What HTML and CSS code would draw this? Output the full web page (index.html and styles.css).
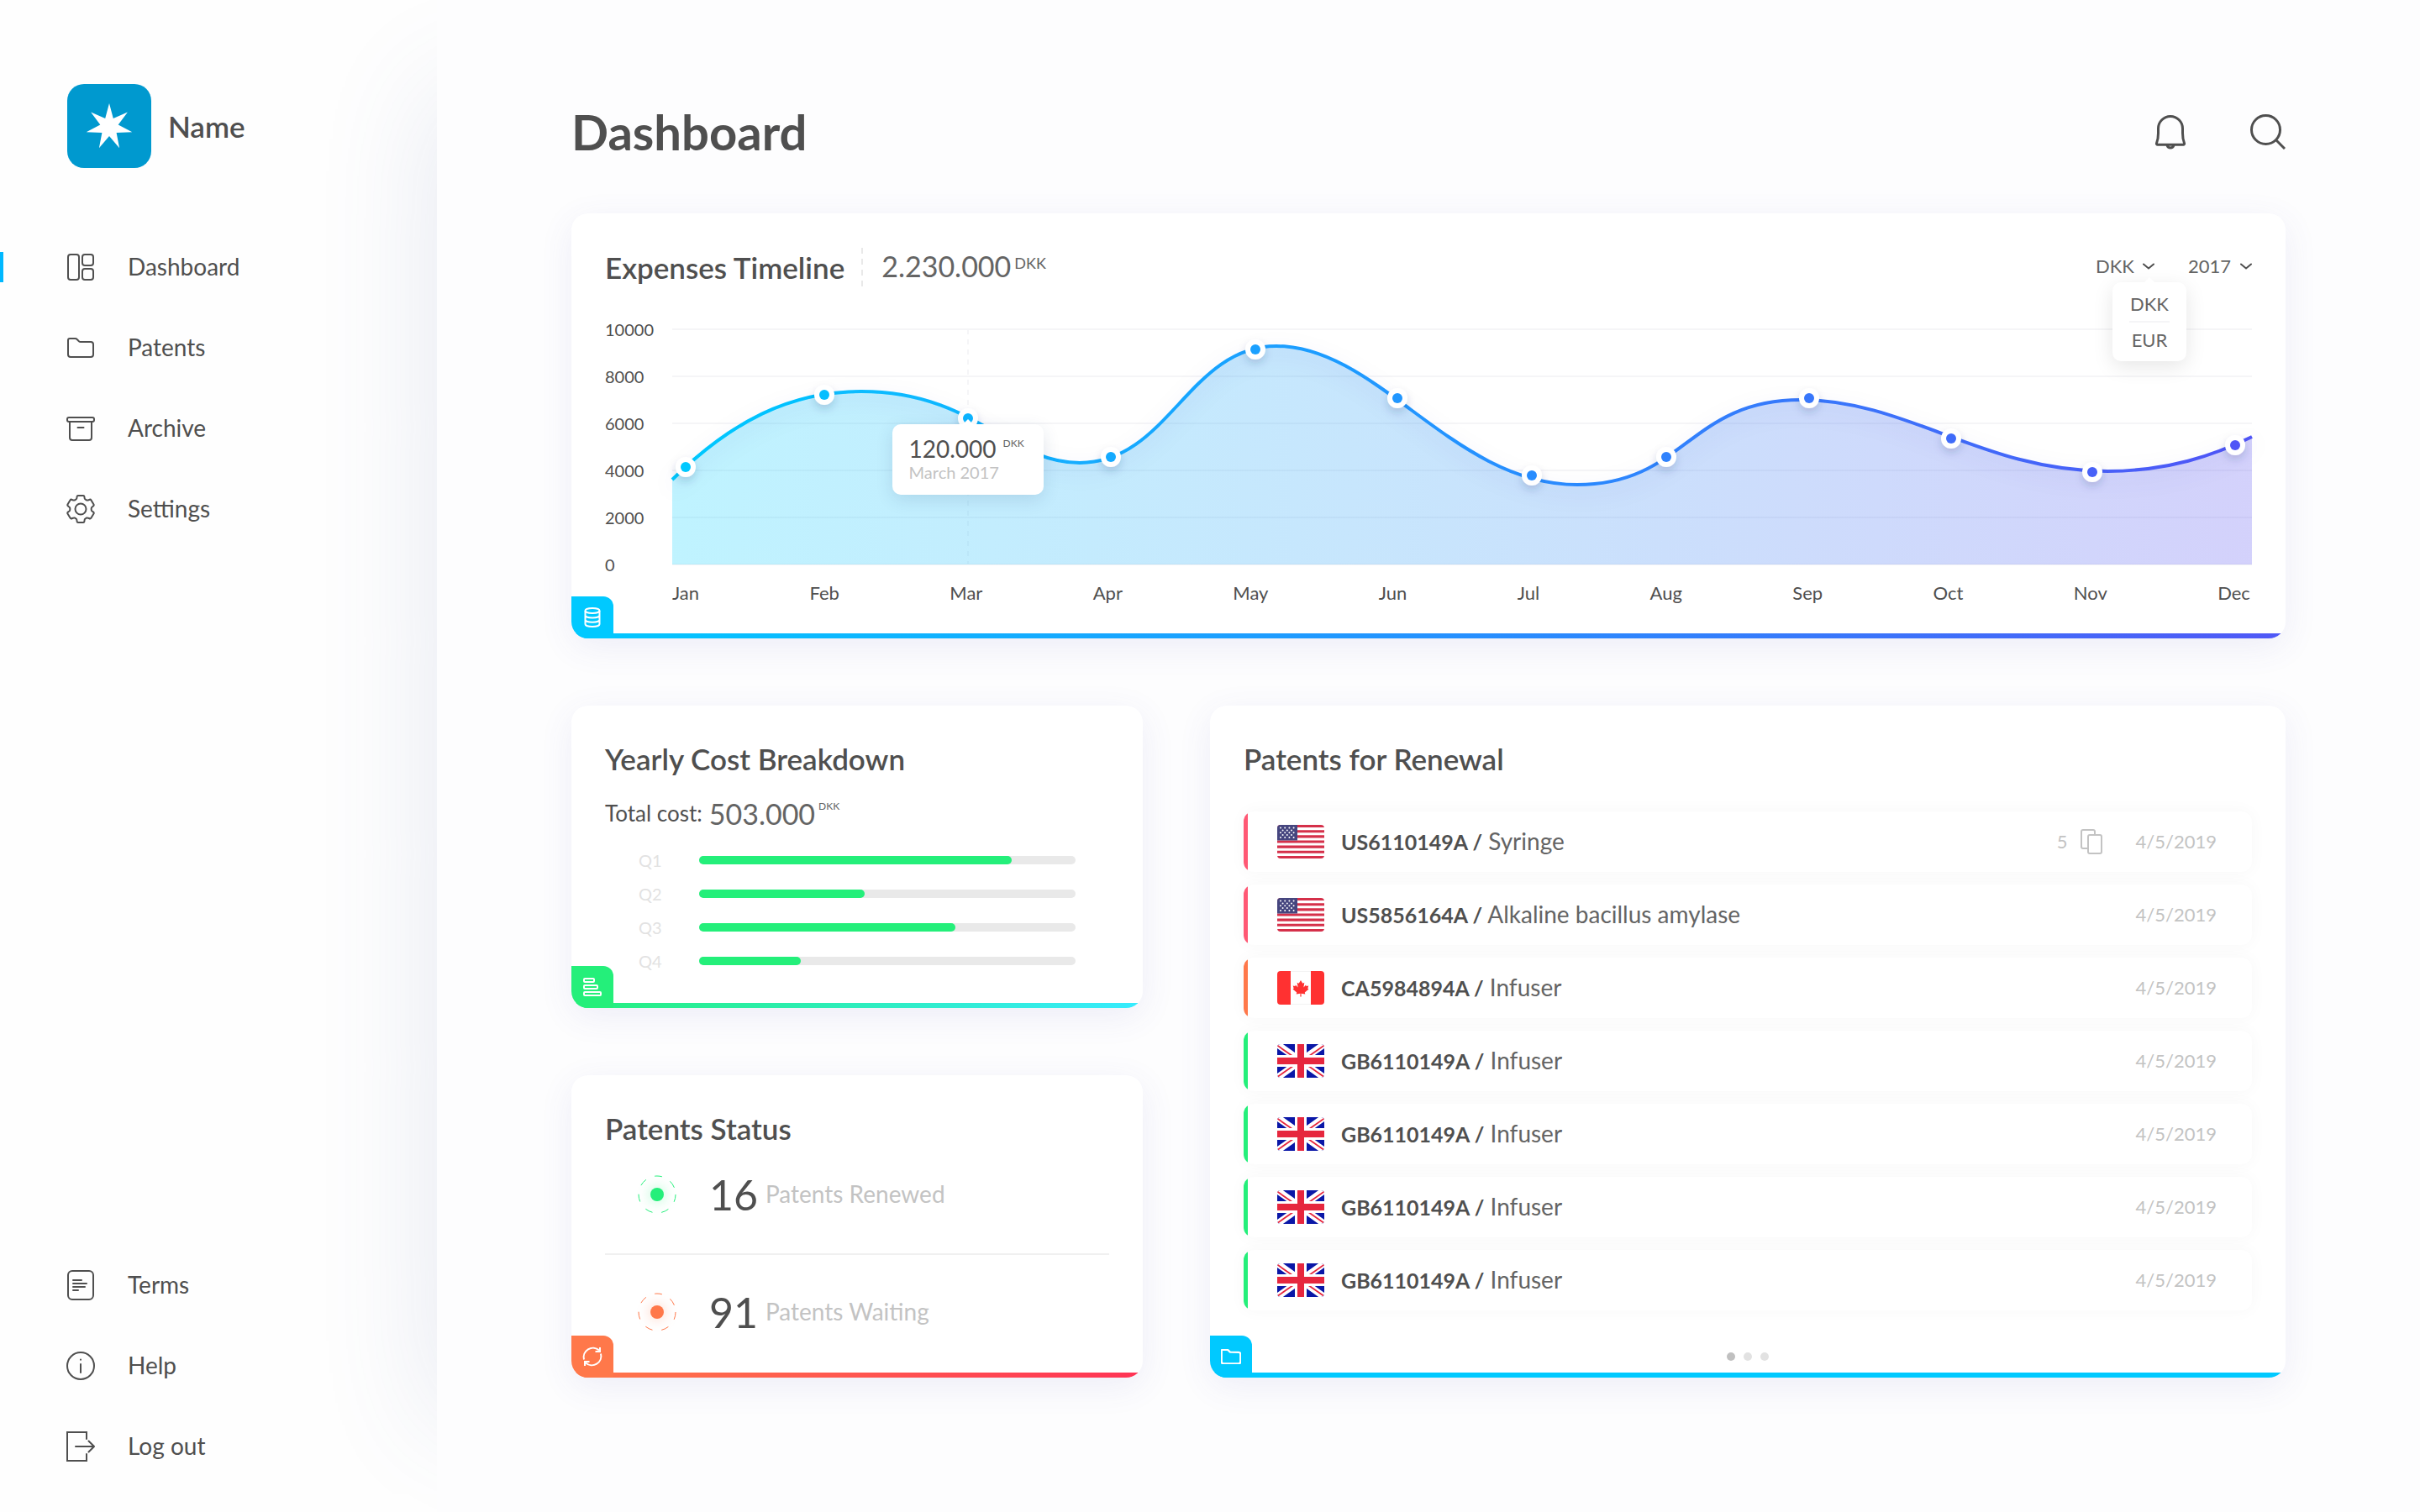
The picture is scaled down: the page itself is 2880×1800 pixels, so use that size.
FILE: index.html
```html
<!DOCTYPE html>
<html lang="en">
<head>
<meta charset="utf-8">
<title>Dashboard</title>
<meta name="viewport" content="width=device-width, initial-scale=1">
<link rel="stylesheet" href="styles.css">
</head>
<body>
<svg class="sprite" aria-hidden="true">
  <symbol id="folder" viewBox="0 0 32 24">
    <path d="M1 3a2 2 0 0 1 2-2h6.500a3 3 0 0 1 2.200 1l2.200 2.200a3 3 0 0 0 2 .8H28a3 3 0 0 1 3 3v12a3 3 0 0 1-3 3H4a3 3 0 0 1-3-3z"/>
  </symbol>
  <symbol id="chevron" viewBox="0 0 14 8"><path d="M1 1.500l6 5 6-5"/></symbol>
  <symbol id="flag-us" viewBox="0 0 56 40">
    <path fill="#fff" d="M0 0h56v40H0z"/>
    <path stroke="#d5304a" stroke-width="3.080" d="M0 1.540h56M0 7.700h56M0 13.860h56M0 20h56M0 26.160h56M0 32.300h56M0 38.460h56"/>
    <path fill="#46467f" d="M0 0h24v18.500H0z"/>
    <path stroke="#fff" stroke-width="2" stroke-linecap="round" stroke-dasharray="0 5.200" d="M4 3.500h17M4 9.200h17M4 15h17M6.600 6.400h14M6.600 12.100h14"/>
  </symbol>
  <symbol id="flag-ca" viewBox="0 0 56 40">
    <path fill="#fff" d="M0 0h56v40H0z"/>
    <path fill="none" stroke="#f3f3f3" d="M16 .5h24M16 39.500h24"/>
    <path fill="#ff3131" d="M0 0h16v40H0zM40 0h16v40H40zM28 11l2.300 3.800 2-1-.9 5.600 2.700-2.900.5 1.500 2.700-.4-1 3.200 1.200.8-4.700 3.900.5 2-4.800-.7.200 3.700h-1.400l.2-3.700-4.800.7.500-2-4.700-3.900 1.200-.8-1-3.200 2.700.4.500-1.500 2.700 2.900-.9-5.600 2 1z"/>
  </symbol>
  <symbol id="flag-gb" viewBox="0 0 56 40">
    <path fill="#0a17a7" d="M0 0h56v40H0z"/>
    <path stroke="#fff" stroke-width="8" d="M-2-1.400L58 41.400M58-1.400L-2 41.400"/>
    <path stroke="#e6273e" stroke-width="1.800" d="M0 1.500L19 14.800M56 1.500L37 14.800M1 38.500L20 25.200M55 38.500L36 25.200"/>
    <path stroke="#fff" stroke-width="14" d="M28 0v40M0 20h56"/>
    <path stroke="#e6273e" stroke-width="8" d="M28 0v40M0 20h56"/>
  </symbol>
</svg>

<div class="layout">
  <aside class="sidebar">
    <a class="brand" href="#">
      <svg class="logo" viewBox="0 0 100 100" aria-hidden="true">
        <rect width="100" height="100" rx="20" fill="#0099cf"/>
        <path fill="#fff" d="M50 23l4.800 18.100 17.100-7.600-11.200 15.100 16.600 8.600-18.700.7 3.500 18.300L50 62 37.900 76.200l3.500-18.300-18.700-.7 16.600-8.600-11.200-15.100 17.100 7.600z"/>
      </svg>
      <span class="brand-name">Name</span>
    </a>
    <nav class="nav">
      <a class="nav-item is-active" href="#">
        <svg class="nav-icon" viewBox="0 0 34 36" aria-hidden="true"><rect x="2" y="3" width="13" height="30" rx="3"/><rect x="19" y="3" width="13" height="13" rx="3"/><rect x="19" y="20" width="13" height="13" rx="3"/></svg>
        Dashboard
      </a>
      <a class="nav-item" href="#">
        <svg class="nav-icon" viewBox="-1 -6 34 36" aria-hidden="true"><use href="#folder" width="32" height="24"/></svg>
        Patents
      </a>
      <a class="nav-item" href="#">
        <svg class="nav-icon" viewBox="0 0 34 36" aria-hidden="true"><rect x="1" y="5" width="32" height="5" rx="2"/><path d="M4 10v19a3 3 0 0 0 3 3h20a3 3 0 0 0 3-3V10M13.500 17h7"/></svg>
        Archive
      </a>
      <a class="nav-item" href="#">
        <svg class="nav-icon" viewBox="-17 -18 34 36" aria-hidden="true"><circle r="6.500"/><path d="M-5.500-11.500Q-4.500-11.900-4.500-14Q-4.400-16-3-16H3Q4.400-16 4.500-14Q4.500-11.900 5.500-11.500L7.200-10.500Q8.200-10.200 10-11Q11.700-11.900 12.500-10.500L15.500-5.500Q16.200-4.200 14.500-3.200Q12.700-2.200 12.700-1V1Q12.700 2.200 14.500 3.200Q16.200 4.200 15.500 5.500L12.500 10.500Q11.700 11.900 10 11Q8.200 10.200 7.200 10.500L5.500 11.500Q4.500 11.900 4.500 14Q4.400 16 3 16H-3Q-4.400 16-4.500 14Q-4.500 11.900-5.500 11.500L-7.200 10.500Q-8.200 10.200-10 11Q-11.700 11.900-12.500 10.500L-15.500 5.500Q-16.200 4.200-14.500 3.200Q-12.700 2.200-12.700 1V-1Q-12.700-2.200-14.500-3.200Q-16.200-4.200-15.500-5.500L-12.500-10.500Q-11.700-11.900-10-11Q-8.200-10.200-7.200-10.500Z"/></svg>
        Settings
      </a>
    </nav>
    <nav class="nav nav-bottom">
      <a class="nav-item" href="#">
        <svg class="nav-icon" viewBox="0 0 34 36" aria-hidden="true"><rect x="2" y="1" width="30" height="34" rx="5"/><path d="M8 12h10M8 16h16M8 20h14M8 24h6"/></svg>
        Terms
      </a>
      <a class="nav-item" href="#">
        <svg class="nav-icon" viewBox="0 0 34 36" aria-hidden="true"><circle cx="17" cy="18" r="16"/><path d="M17 16v10M17 10.500v.2"/></svg>
        Help
      </a>
      <a class="nav-item" href="#">
        <svg class="nav-icon" viewBox="0 0 34 36" aria-hidden="true"><path d="M24 9V1H1v34h23v-8M11 18h22M26.500 11.500L33 18l-6.500 6.500"/></svg>
        Log out
      </a>
    </nav>
  </aside>

  <main class="main">
    <header class="topbar">
      <h1>Dashboard</h1>
      <div class="actions">
        <button class="icon-button" type="button" aria-label="Notifications">
          <svg viewBox="0 0 42 42"><path d="M3.500 34.500c2-5 2-7 2-12V17a14.500 14.500 0 0 1 29 0v5.500c0 5 0 7 2 12a1.300 1.300 0 0 1-1.200 1.800H4.700a1.300 1.300 0 0 1-1.200-1.800zM16 37a4.200 4.200 0 0 0 8 0"/></svg>
        </button>
        <button class="icon-button" type="button" aria-label="Search">
          <svg viewBox="0 0 42 42"><circle cx="18.500" cy="18.500" r="17"/><path d="M31 31l10 10"/></svg>
        </button>
      </div>
    </header>

    <section class="card card-expenses">
      <div class="card-body">
        <div class="card-head">
          <h2>Expenses Timeline</h2>
          <p class="amount total">2.230.000<sup>DKK</sup></p>
          <div class="filters">
            <div class="filter">
              <label class="select">
                <select aria-label="Currency"><option>DKK</option><option>EUR</option></select>
                <svg aria-hidden="true"><use href="#chevron"/></svg>
              </label>
              <ul class="menu">
                <li>DKK</li>
                <li>EUR</li>
              </ul>
            </div>
            <label class="select">
              <select aria-label="Year"><option>2017</option></select>
              <svg aria-hidden="true"><use href="#chevron"/></svg>
            </label>
          </div>
        </div>

        <div class="chart">
          <ol class="y-axis"><li>10000</li><li>8000</li><li>6000</li><li>4000</li><li>2000</li><li>0</li></ol>
          <div class="plot">
            <svg viewBox="0 0 1880 280" role="img" aria-label="Expenses by month">
              <defs>
                <linearGradient id="line" gradientUnits="userSpaceOnUse" x1="0" y1="0" x2="1880" y2="0">
                  <stop offset="0" stop-color="#00c9ff"/><stop offset=".5" stop-color="#2492ff"/><stop offset="1" stop-color="#5054f6"/>
                </linearGradient>
                <linearGradient id="area" gradientUnits="userSpaceOnUse" x1="0" y1="0" x2="1880" y2="0">
                  <stop offset="0" stop-color="#00d0ff"/><stop offset=".5" stop-color="#2492f5"/><stop offset="1" stop-color="#5048f0"/>
                </linearGradient>
                <filter id="glow" x="-5%" y="-20%" width="110%" height="150%"><feDropShadow dx="0" dy="8" stdDeviation="12" flood-color="#3050a0" flood-opacity=".14"/></filter>
                <filter id="dot" x="-100%" y="-100%" width="300%" height="300%"><feDropShadow dx="0" dy="5" stdDeviation="5" flood-color="#204070" flood-opacity=".18"/></filter>
              </defs>
              <path class="grid-lines" d="M0 0h1880M0 56h1880M0 112h1880M0 168h1880M0 224h1880M0 280h1880"/>
              <path class="marker-line" d="M352 0v280"/>
              <path fill="url(#area)" opacity=".25" d="M0 179C70 110 140 74 225 74C360 74 400 159 485 159C590 159 615 20 719 20C840 20 930 185 1077 185C1205 185 1210 84 1343 84C1470 84 1560 169 1708 169C1780 169 1835 150 1880 128V280H0Z"/>
              <path fill="none" stroke="url(#line)" stroke-width="4" filter="url(#glow)" d="M0 179C70 110 140 74 225 74C360 74 400 159 485 159C590 159 615 20 719 20C840 20 930 185 1077 185C1205 185 1210 84 1343 84C1470 84 1560 169 1708 169C1780 169 1835 150 1880 128"/>
              <g fill="#fff" filter="url(#dot)">
                <circle cx="16" cy="164" r="12"/><circle cx="181" cy="78" r="12"/><circle cx="352" cy="106" r="12"/><circle cx="522" cy="152" r="12"/><circle cx="694" cy="24" r="12"/><circle cx="863" cy="82" r="12"/><circle cx="1023" cy="174" r="12"/><circle cx="1183" cy="152" r="12"/><circle cx="1353" cy="82" r="12"/><circle cx="1522" cy="130" r="12"/><circle cx="1690" cy="170" r="12"/><circle cx="1860" cy="138" r="12"/>
              </g>
              <g fill="url(#line)">
                <circle cx="16" cy="164" r="6"/><circle cx="181" cy="78" r="6"/><circle cx="352" cy="106" r="6"/><circle cx="522" cy="152" r="6"/><circle cx="694" cy="24" r="6"/><circle cx="863" cy="82" r="6"/><circle cx="1023" cy="174" r="6"/><circle cx="1183" cy="152" r="6"/><circle cx="1353" cy="82" r="6"/><circle cx="1522" cy="130" r="6"/><circle cx="1690" cy="170" r="6"/><circle cx="1860" cy="138" r="6"/>
              </g>
            </svg>
            <div class="tooltip" role="tooltip">
              <p class="tooltip-value">120.000<sup>DKK</sup></p>
              <p class="tooltip-date">March 2017</p>
            </div>
          </div>
          <ol class="x-axis"><li>Jan</li><li>Feb</li><li>Mar</li><li>Apr</li><li>May</li><li>Jun</li><li>Jul</li><li>Aug</li><li>Sep</li><li>Oct</li><li>Nov</li><li>Dec</li></ol>
        </div>
      </div>
      <div class="card-line"></div>
      <span class="card-tab"><svg viewBox="0 0 24 24" aria-hidden="true"><ellipse cx="12" cy="4" rx="8.500" ry="3"/><path d="M3.500 4v16c0 1.700 3.800 3 8.500 3s8.500-1.300 8.500-3V4M3.500 9.500c0 1.700 3.800 3 8.500 3s8.500-1.300 8.500-3M3.500 14.800c0 1.700 3.800 3 8.500 3s8.500-1.300 8.500-3"/></svg></span>
    </section>

    <div class="columns">
      <div class="stack">
        <section class="card card-costs">
          <div class="card-body">
            <h2>Yearly Cost Breakdown</h2>
            <p class="cost"><span class="cost-label">Total cost:</span><span class="amount">503.000</span><sup>DKK</sup></p>
            <ul class="quarters">
              <li>Q1<span class="bar"><span class="bar-fill" style="width: 83%"></span></span></li>
              <li>Q2<span class="bar"><span class="bar-fill" style="width: 44%"></span></span></li>
              <li>Q3<span class="bar"><span class="bar-fill" style="width: 68%"></span></span></li>
              <li>Q4<span class="bar"><span class="bar-fill" style="width: 27%"></span></span></li>
            </ul>
          </div>
          <div class="card-line"></div>
          <span class="card-tab"><svg viewBox="0 0 24 24" aria-hidden="true"><rect x="2" y="2" width="12" height="4" rx="1"/><rect x="2" y="10" width="16" height="4" rx="1"/><rect x="2" y="18" width="20" height="4" rx="1"/></svg></span>
        </section>

        <section class="card card-status">
          <div class="card-body">
            <h2>Patents Status</h2>
            <ul class="statuses">
              <li class="status renewed">
                <svg class="pulse" viewBox="0 0 48 48" aria-hidden="true"><circle class="pulse-ring" cx="24" cy="24" r="22"/><circle class="pulse-dot" cx="24" cy="24" r="8"/></svg>
                <strong>16</strong><span>Patents Renewed</span>
              </li>
              <li class="status waiting">
                <svg class="pulse" viewBox="0 0 48 48" aria-hidden="true"><circle class="pulse-ring" cx="24" cy="24" r="22"/><circle class="pulse-dot" cx="24" cy="24" r="8"/></svg>
                <strong>91</strong><span>Patents Waiting</span>
              </li>
            </ul>
          </div>
          <div class="card-line"></div>
          <span class="card-tab"><svg viewBox="0 0 24 24" aria-hidden="true"><path d="M2 15.500A11 11 0 0 1 20 4.500M22 8.500A11 11 0 0 1 4 19.500M21 1v5h-5.500M3 23v-5h5.500"/></svg></span>
        </section>
      </div>

      <section class="card card-renewal">
        <div class="card-body">
          <h2>Patents for Renewal</h2>
          <ul class="patents">
            <li class="patent urgent"><svg class="flag"><use href="#flag-us"/></svg><a href="#"><b>US6110149A /</b> Syringe</a>
              <span class="copies">5 <svg viewBox="0 0 26 30" aria-hidden="true"><path d="M9 23H3a2 2 0 0 1-2-2V3a2 2 0 0 1 2-2h12a2 2 0 0 1 2 2v4"/><rect x="9" y="7" width="16" height="22" rx="2"/></svg></span>
              <time>4/5/2019</time></li>
            <li class="patent urgent"><svg class="flag"><use href="#flag-us"/></svg><a href="#"><b>US5856164A /</b> Alkaline bacillus amylase</a><time>4/5/2019</time></li>
            <li class="patent soon"><svg class="flag"><use href="#flag-ca"/></svg><a href="#"><b>CA5984894A /</b> Infuser</a><time>4/5/2019</time></li>
            <li class="patent"><svg class="flag"><use href="#flag-gb"/></svg><a href="#"><b>GB6110149A /</b> Infuser</a><time>4/5/2019</time></li>
            <li class="patent"><svg class="flag"><use href="#flag-gb"/></svg><a href="#"><b>GB6110149A /</b> Infuser</a><time>4/5/2019</time></li>
            <li class="patent"><svg class="flag"><use href="#flag-gb"/></svg><a href="#"><b>GB6110149A /</b> Infuser</a><time>4/5/2019</time></li>
            <li class="patent"><svg class="flag"><use href="#flag-gb"/></svg><a href="#"><b>GB6110149A /</b> Infuser</a><time>4/5/2019</time></li>
          </ul>
          <div class="pager">
            <button class="is-current" type="button" aria-label="Page 1"></button>
            <button type="button" aria-label="Page 2"></button>
            <button type="button" aria-label="Page 3"></button>
          </div>
        </div>
        <div class="card-line"></div>
        <span class="card-tab"><svg viewBox="-4 -4 40 32" aria-hidden="true"><use href="#folder" width="32" height="24"/></svg></span>
      </section>
    </div>
  </main>
</div>
</body>
</html>
```
FILE: styles.css
```css
:root {
  --text: #4f4f4f;
  --soft: #646464;
  --muted: #c3c3c3;
  --line: #f5f5f7;
  --blue: #00c9ff;
  --green: #24ef7a;
  --orange: #ff784a;
}

* { box-sizing: border-box; }

body {
  margin: 0;
  background: #fdfdfe;
  color: var(--text);
  font: 400 28px/1.2 Lato, sans-serif;
}

h1, h2, p, ul, ol { margin: 0; padding: 0; }
ul, ol { list-style: none; }
a { color: inherit; text-decoration: none; }
button, select { font: inherit; color: inherit; border: 0; padding: 0; background: none; }
svg { display: block; }
.sprite { position: absolute; width: 0; height: 0; }

.layout {
  display: grid;
  grid-template-columns: 520px 1fr;
  min-height: 100vh;
}

/* Sidebar */
.sidebar {
  position: relative;
  overflow: hidden;
  display: flex;
  flex-direction: column;
  padding: 100px 0 30px;
  background: #fefefe;
}
.sidebar::after {
  content: "";
  position: absolute;
  top: 110px;
  bottom: 110px;
  left: 100%;
  width: 400px;
  box-shadow: 0 0 140px rgba(80, 100, 160, .15);
}
.brand {
  display: flex;
  align-items: center;
  gap: 20px;
  padding-left: 80px;
  margin-bottom: 70px;
}
.logo { width: 100px; height: 100px; }
.brand-name { font-size: 35px; font-weight: 600; }
.nav-item {
  display: flex;
  align-items: center;
  gap: 39px;
  height: 96px;
  padding-left: 79px;
}
.nav-item.is-active {
  background: linear-gradient(#00b8ff, #00b8ff) left center / 4px 36px no-repeat;
}
.nav-icon {
  width: 34px;
  height: 36px;
  fill: none;
  stroke: var(--text);
  stroke-width: 2;
  stroke-linecap: round;
}
.nav-bottom { margin-top: auto; }

/* Main */
.main { min-width: 0; padding: 116px 160px; }
.topbar {
  display: flex;
  align-items: center;
  justify-content: space-between;
  height: 82px;
  margin-bottom: 56px;
}
h1 { font-size: 58px; font-weight: 700; }
h2 { font-size: 35px; line-height: 46px; font-weight: 600; }
.actions { display: flex; gap: 73px; }
.icon-button svg {
  width: 42px;
  height: 42px;
  fill: none;
  stroke: var(--text);
  stroke-width: 3;
}

/* Cards */
.card {
  position: relative;
  display: flex;
  flex-direction: column;
  overflow: hidden;
  border-radius: 20px;
  background: #fff;
  box-shadow: 0 10px 40px rgba(80, 80, 180, .09);
}
.card-body { flex: 1; padding: 40px 40px 30px; }
.card-line { height: 6px; background: var(--accent); }
.card-tab {
  position: absolute;
  left: 0;
  bottom: 0;
  display: grid;
  place-items: center;
  width: 50px;
  height: 50px;
  border-top-right-radius: 12px;
  background: var(--tab);
}
.card-tab svg {
  width: 24px;
  height: 24px;
  fill: none;
  stroke: #fff;
  stroke-width: 2;
}
.card-expenses { --tab: var(--blue); --accent: linear-gradient(90deg, #00c9ff, #2492ff 50%, #5058f6); margin-bottom: 80px; }
.card-expenses .card-body { padding-bottom: 33px; }
.card-costs { --tab: var(--green); --accent: linear-gradient(90deg, #24ef7a, #36ebff); }
.card-status { --tab: var(--orange); --accent: linear-gradient(90deg, #ff784a, #ff3355); }
.card-renewal { --tab: var(--blue); --accent: var(--blue); }
.card-renewal .card-tab svg { width: 30px; stroke-width: 3; }

.columns {
  display: grid;
  grid-template-columns: 17fr 32fr;
  gap: 80px;
}
.stack { display: flex; flex-direction: column; gap: 80px; }

/* Expenses */
.card-head { display: flex; align-items: center; height: 47px; margin-bottom: 40px; }
.amount { font-size: 34px; color: var(--soft); }
.total {
  display: flex;
  align-items: center;
  gap: 4px;
  height: 46px;
  margin-left: 20px;
  padding-left: 24px;
  background: repeating-linear-gradient(#e9e9e9 0 7px, transparent 7px 13px) left / 2px 100% no-repeat;
}
sup { align-self: flex-start; line-height: 1; color: var(--soft); }
.total sup { padding-top: 9px; font-size: 18px; }
.filters { display: flex; gap: 40px; margin-left: auto; font-size: 22px; color: var(--soft); }
.filter { position: relative; }
.select { display: flex; align-items: center; gap: 10px; }
.select select { appearance: none; outline: 0; }
.select svg { width: 14px; height: 8px; fill: none; stroke: var(--text); stroke-width: 2; stroke-linecap: round; pointer-events: none; }
.menu {
  position: absolute;
  z-index: 2;
  top: 32px;
  right: -38px;
  width: 88px;
  padding: 5px 20px;
  border-radius: 10px;
  background: #fff;
  box-shadow: 0 6px 24px rgba(0, 0, 0, .1);
  line-height: 41px;
  text-align: center;
}
.menu li + li { border-top: 2px solid var(--line); }
.menu::before, .tooltip::before {
  content: "";
  position: absolute;
  top: -4px;
  left: 50%;
  width: 10px;
  height: 10px;
  margin-left: -5px;
  background: #fff;
  transform: rotate(45deg);
}

.chart { display: grid; grid-template-columns: 80px 1fr; }
.y-axis {
  display: flex;
  flex-direction: column;
  justify-content: space-between;
  font-size: 20px;
  line-height: 22px;
}
.plot { position: relative; padding: 11px 0; }
.plot > svg { width: 100%; height: auto; overflow: visible; }
.grid-lines { fill: none; stroke: var(--line); stroke-width: 2; }
.marker-line { stroke: var(--line); stroke-width: 2; stroke-dasharray: 6 6; }
.x-axis {
  grid-column: 2;
  display: flex;
  justify-content: space-between;
  margin-top: 8px;
  padding-right: 2px;
  font-size: 22px;
  line-height: 30px;
}
.tooltip {
  position: absolute;
  top: 41%;
  left: calc(18.7% - 90px);
  width: 180px;
  padding: 13px 20px 15px;
  border-radius: 10px;
  background: #fff;
  box-shadow: 0 6px 20px rgba(30, 60, 110, .13);
}
.tooltip-value { display: flex; gap: 8px; font-size: 28px; line-height: 32px; }
.tooltip-value sup { padding-top: 4px; font-size: 12px; }
.tooltip-date { font-size: 20px; line-height: 24px; color: var(--muted); }

/* Yearly costs */
.cost { display: flex; align-items: center; height: 40px; margin-top: 23px; }
.cost-label { font-size: 26px; }
.cost .amount { margin-left: 8px; }
.cost sup { margin-left: 4px; padding-top: 5px; font-size: 12px; }
.quarters { margin-top: 15px; padding: 0 40px; font-size: 20px; color: #e2e2e2; }
.quarters li { display: grid; grid-template-columns: 72px 1fr; align-items: center; height: 40px; }
.bar { height: 10px; border-radius: 5px; background: #e9e9e9; }
.bar-fill { display: block; height: 10px; border-radius: 5px; background: var(--green); }

/* Status */
.card-status .card-body { padding-bottom: 18px; }
.statuses { display: grid; row-gap: 16px; margin-top: 2px; }
.status { display: flex; align-items: center; height: 108px; padding-left: 38px; color: var(--muted); }
.status + .status { height: 124px; padding-top: 14px; border-top: 2px solid #f0f0f0; }
.status strong { width: 67px; margin-left: 38px; font-size: 50px; font-weight: 400; color: var(--text); }
.pulse { width: 48px; height: 48px; overflow: visible; }
.pulse-ring { fill: none; stroke: var(--tone); stroke-width: 1; stroke-dasharray: 9 11; }
.pulse-dot { fill: var(--tone); filter: drop-shadow(0 0 8px var(--glow)); }
.renewed { --tone: var(--green); --glow: rgba(36, 239, 122, .4); }
.waiting { --tone: var(--orange); --glow: rgba(255, 120, 74, .4); }

/* Renewal list */
.card-renewal .card-body { display: flex; flex-direction: column; padding-bottom: 14px; }
.patents { display: grid; gap: 15px; margin-top: 40px; }
.patent {
  display: flex;
  align-items: center;
  height: 72px;
  padding: 0 42px 0 40px;
  border-radius: 12px;
  background: linear-gradient(var(--tone, var(--green)), var(--tone, var(--green))) left / 5px 100% no-repeat #fff;
  box-shadow: 0 0 20px rgba(0, 0, 0, .035);
  color: var(--soft);
}
.patent b { font-size: 25px; font-weight: 700; color: var(--text); }
.urgent { --tone: #ff5874; }
.soon { --tone: #ff784a; }
.flag { width: 56px; height: 40px; margin-right: 20px; border-radius: 4px; }
.patent time { margin-left: auto; font-size: 22px; color: var(--muted); }
.copies { display: flex; align-items: center; gap: 15px; margin-left: auto; font-size: 22px; color: var(--muted); }
.copies + time { margin-left: 40px; }
.copies svg { width: 26px; height: 30px; fill: none; stroke: var(--muted); stroke-width: 2; }
.pager { display: flex; justify-content: center; gap: 10px; margin-top: auto; }
.pager button { width: 10px; height: 10px; border-radius: 50%; background: #e2e2e2; }
.pager .is-current { background: #c0c0c0; }
```
